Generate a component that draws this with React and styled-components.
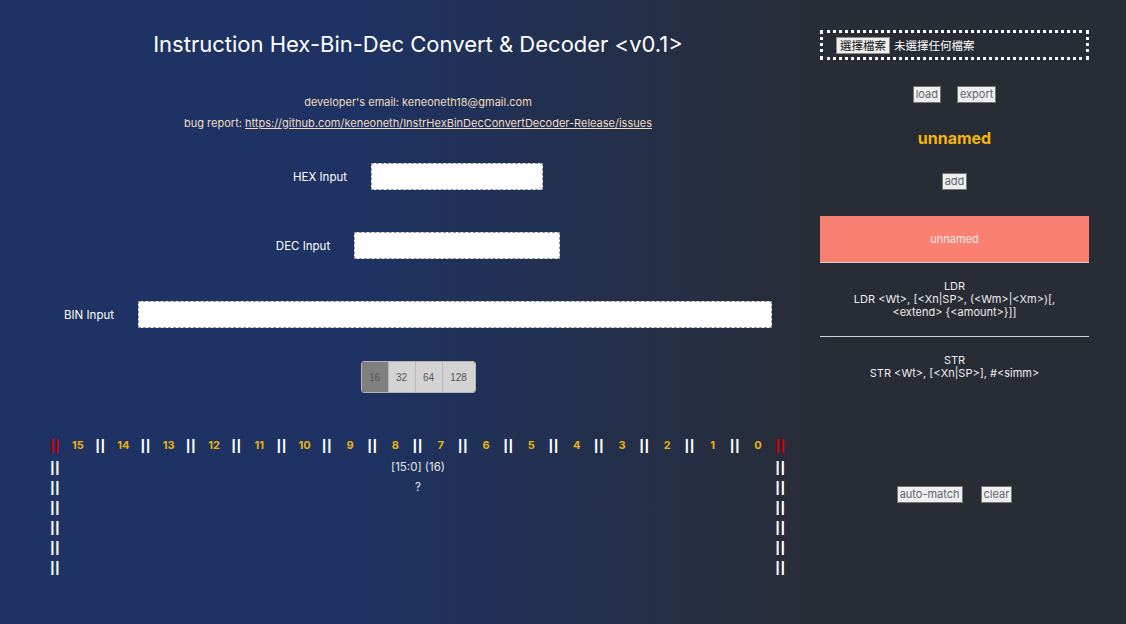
import React from "react";
import styled, { createGlobalStyle } from "styled-components";

const GlobalStyle = createGlobalStyle`
  html, body {
    margin: 0;
    padding: 0;
  }
  body {
    font-family: Inter, "Noto Sans", sans-serif;
  }
`;

const Page = styled.div`
  min-height: 624px;
  display: grid;
  grid-template-columns: 820px 269px 1fr;
  background: linear-gradient(90deg, #1e3363 0%, #1e3363 32%, #282c35 74%, #282c35 100%);
  color: #fff;
`;

const Main = styled.div`
  padding-left: 16px;
  display: flex;
  flex-direction: column;
  align-items: center;
`;

const Title = styled.h1`
  margin: 31px 0 0;
  font-size: 22px;
  line-height: 26px;
  font-weight: 400;
  color: #fff;
`;

const Info = styled.div`
  margin-top: 35px;
  font-size: 11px;
  color: #f2dcc0;
  text-align: center;
`;

const InfoLine = styled.div`
  height: 21px;
  line-height: 21px;
`;

const Link = styled.a`
  color: #f2dcc0;
  text-decoration: underline;
`;

const InputRow = styled.div`
  display: flex;
  align-items: center;
  gap: 24px;
  margin-top: ${(p) => p.top}px;
`;

const Label = styled.span`
  font-size: 11.5px;
  color: #fff;
`;

const TextBox = styled.input`
  box-sizing: border-box;
  width: ${(p) => p.w}px;
  height: 27px;
  border: 1px dashed #9a9a9a;
  background: #fff;
  outline: none;
`;

const Segments = styled.div`
  margin-top: 33px;
  display: flex;
  height: 32px;
  border: 1px solid #b5b5b5;
  border-radius: 3px;
  overflow: hidden;
  box-sizing: border-box;
`;

const Segment = styled.button`
  width: ${(p) => p.w}px;
  border: none;
  border-left: ${(p) => (p.first ? "none" : "1px solid #b8b8b8")};
  background: ${(p) => (p.active ? "#808080" : "#d3d3d3")};
  color: #555;
  font-family: "Liberation Sans", Arial, sans-serif;
  font-size: 10px;
  padding: 0;
`;

const Bits = styled.div`
  margin-top: 42px;
  width: 748px;
  display: grid;
  grid-template-columns: repeat(33, 1fr);
  align-items: center;
`;

const Pipe = styled.span`
  justify-self: center;
  font-family: "Liberation Sans", Arial, sans-serif;
  font-weight: 700;
  font-size: 15px;
  line-height: 20px;
  letter-spacing: 1px;
  color: ${(p) => (p.red ? "#d00000" : "#fff")};
`;

const BitNum = styled.span`
  justify-self: center;
  font-size: 11px;
  font-weight: 700;
  color: #e8b40f;
`;

const Field = styled.div`
  margin-top: 2px;
  width: 748px;
  display: grid;
  grid-template-columns: 22.66px 1fr 22.66px;
`;

const PipeCol = styled.div`
  display: flex;
  flex-direction: column;
  align-items: center;
`;

const FieldBody = styled.div`
  text-align: center;
  font-size: 11.5px;
  line-height: 20px;
  color: #e6e6e6;
`;

const Side = styled.div`
  display: flex;
  flex-direction: column;
  align-items: center;
`;

const FileBox = styled.div`
  margin-top: 30px;
  box-sizing: border-box;
  width: 100%;
  height: 30px;
  border: 3px dotted #fff;
  display: flex;
  align-items: center;
  padding-left: 13px;
  gap: 4px;
  font-family: "Noto Sans CJK TC", sans-serif;
  font-size: 11.5px;
`;

const FileButton = styled.span`
  background: #efefef;
  border: 1px solid #8f8f8f;
  color: #111;
  padding: 0 3px;
  line-height: 15px;
`;

const ButtonRow = styled.div`
  display: flex;
  gap: ${(p) => p.gap}px;
  margin-top: ${(p) => p.top}px;
`;

const Btn = styled.button`
  background: #efefef;
  border: 1px solid #767676;
  color: #5b6470;
  font-family: Inter, "Noto Sans", sans-serif;
  font-size: 11px;
  line-height: 15px;
  padding: 0 2px;
`;

const SetName = styled.div`
  margin-top: 25px;
  font-size: 16px;
  font-weight: 700;
  color: #f5b50a;
`;

const List = styled.div`
  margin-top: 26px;
  width: 100%;
`;

const Item = styled.div`
  box-sizing: border-box;
  min-height: ${(p) => (p.active ? 47 : 72)}px;
  padding: ${(p) => (p.active ? "17px 30px 15px" : "17px 30px")};
  background: ${(p) => (p.active ? "#fa8072" : "transparent")};
  border-bottom: ${(p) => (p.last ? "none" : "1px solid #d0d0d0")};
  text-align: center;
  font-size: 11px;
  line-height: 13px;
  color: #eee;
`;

const sizes = [16, 32, 64, 128];
const widths = [26, 27, 27, 33];

const instrs = [
  { name: "LDR", syntax: "LDR <Wt>, [<Xn|SP>, (<Wm>|<Xm>)[, <extend> {<amount>}]]" },
  { name: "STR", syntax: "STR <Wt>, [<Xn|SP>], #<simm>" },
];

export default function App() {
  const bitCells = [];
  bitCells.push(<Pipe key="l" red>||</Pipe>);
  for (let i = 15; i >= 0; i--) {
    bitCells.push(<BitNum key={"n" + i}>{i}</BitNum>);
    if (i > 0) bitCells.push(<Pipe key={"p" + i}>||</Pipe>);
  }
  bitCells.push(<Pipe key="r" red>||</Pipe>);

  const pipes = [0, 1, 2, 3, 4, 5].map((i) => <Pipe key={i}>||</Pipe>);

  return (
    <Page>
      <GlobalStyle />
      <Main>
        <Title>Instruction Hex-Bin-Dec Convert &amp; Decoder &lt;v0.1&gt;</Title>
        <Info>
          <InfoLine>developer's email: keneoneth18@gmail.com</InfoLine>
          <InfoLine>
            bug report:{" "}
            <Link href="#">https://github.com/keneoneth/InstrHexBinDecConvertDecoder-Release/issues</Link>
          </InfoLine>
        </Info>
        <InputRow top={29}>
          <Label>HEX Input</Label>
          <TextBox w={172} />
        </InputRow>
        <InputRow top={42}>
          <Label>DEC Input</Label>
          <TextBox w={206} />
        </InputRow>
        <InputRow top={42}>
          <Label>BIN Input</Label>
          <TextBox w={634} />
        </InputRow>
        <Segments>
          {sizes.map((s, i) => (
            <Segment key={s} w={widths[i]} first={i === 0} active={s === 16}>
              {s}
            </Segment>
          ))}
        </Segments>
        <Bits>{bitCells}</Bits>
        <Field>
          <PipeCol>{pipes}</PipeCol>
          <FieldBody>
            <div>[15:0] (16)</div>
            <div>?</div>
          </FieldBody>
          <PipeCol>{pipes}</PipeCol>
        </Field>
      </Main>
      <Side>
        <FileBox>
          <FileButton>選擇檔案</FileButton>
          <span>未選擇任何檔案</span>
        </FileBox>
        <ButtonRow top={26} gap={16}>
          <Btn>load</Btn>
          <Btn>export</Btn>
        </ButtonRow>
        <SetName>unnamed</SetName>
        <ButtonRow top={25} gap={0}>
          <Btn>add</Btn>
        </ButtonRow>
        <List>
          <Item active>unnamed</Item>
          {instrs.map((ins, i) => (
            <Item key={ins.name} last={i === instrs.length - 1}>
              <div>{ins.name}</div>
              <div>{ins.syntax}</div>
            </Item>
          ))}
        </List>
        <ButtonRow top={77} gap={18}>
          <Btn>auto-match</Btn>
          <Btn>clear</Btn>
        </ButtonRow>
      </Side>
    </Page>
  );
}
